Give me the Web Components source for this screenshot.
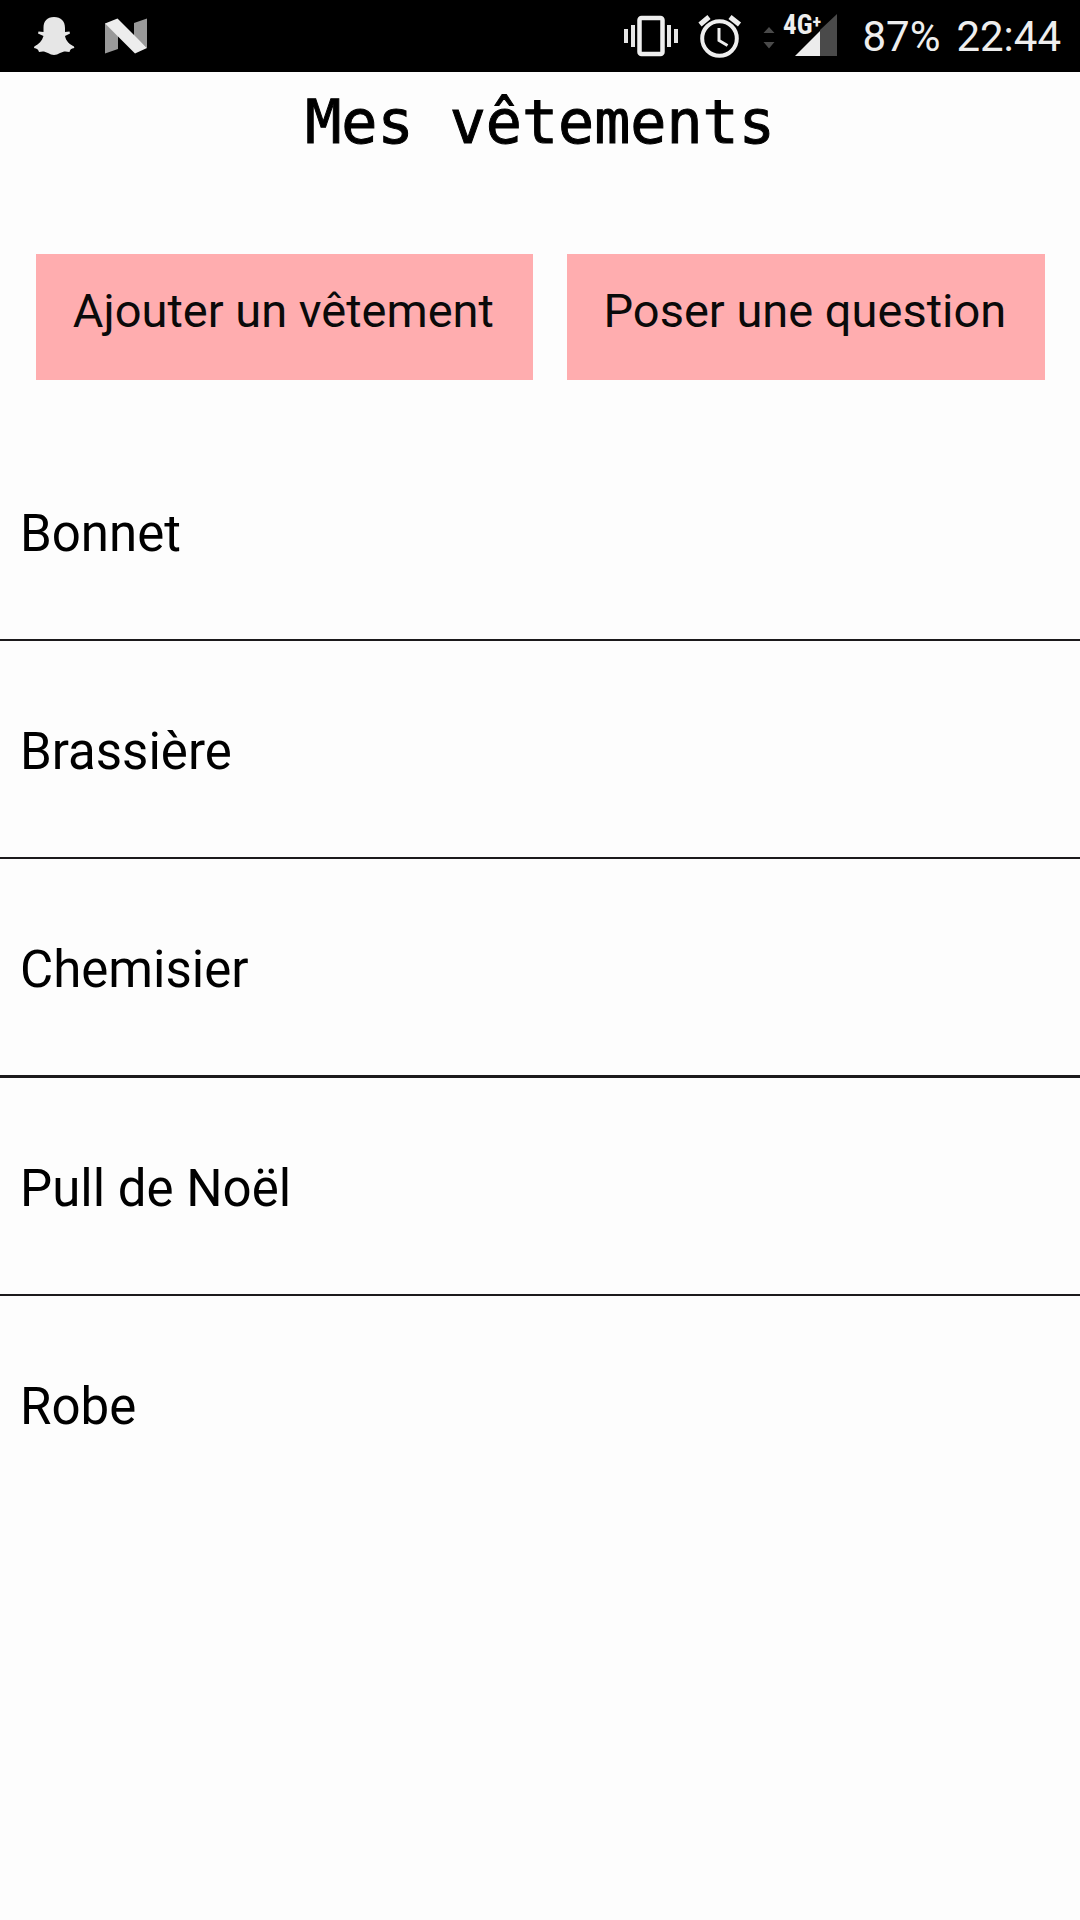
<!DOCTYPE html>
<html lang="fr">
<head>
<meta charset="utf-8">
<meta name="viewport" content="width=device-width, initial-scale=1">
<title>Mes vêtements</title>
<style>
html, body { margin: 0; min-height: 100%; background: #fdfdfd; }
body { font-family: Roboto, sans-serif; color: #000; }
</style>
</head>
<body>
<wardrobe-app></wardrobe-app>
<script>
function define(name, html) {
  const template = document.createElement('template');
  template.innerHTML = html;
  customElements.define(name, class extends HTMLElement {
    constructor() {
      super();
      this.attachShadow({ mode: 'open' }).appendChild(template.content.cloneNode(true));
    }
  });
}

define('status-bar', `
<style>
:host { display: flex; align-items: center; justify-content: space-between; box-sizing: border-box; height: 72px; padding: 0 19px 0 32px; background: #000; color: #eee; font-size: 42px; line-height: 72px; }
.group { display: flex; align-items: center; }
svg { display: block; flex: none; }
.network { font-family: "Roboto Condensed", Roboto, sans-serif; }
.readout { display: flex; gap: 16px; margin-left: 22px; padding-top: 2px; line-height: 70px; }
</style>
<div class="group">
<svg width="160" height="72" viewBox="32 0 160 72" aria-hidden="true">
<path fill="#e6e6e6" d="M54 17C61 17 65 21 65 28V32L69.500 31.500L70 33.500L65 36C66 41 69 44 74 46.500L74.300 48C71 48.500 70 49.500 69.500 52C65 51 63 51.500 60 53C56 55.500 52 55.500 48 53C45 51.500 43 51 39 52C38.500 49.500 37 48.500 34 48L34.300 46.500C39 44 42 41 43.500 36L38 33.500L38.500 31.500L43.500 32V28C43.500 21 47 17 54 17Z"/>
<path fill="#999" d="M105 23L118 35V49L105 53.500ZM134 23L147 18.500V48L134 36Z"/>
<path fill="#ededed" d="M105 23.500L117.500 18.500L147 48L135 53.500Z"/>
</svg>
</div>
<div class="group">
<svg width="216" height="72" viewBox="624 0 216 72" role="img" aria-label="Vibreur, alarme, réseau 4G+">
<rect x="639.500" y="18" width="23" height="36" rx="2" fill="none" stroke="#eee" stroke-width="4.500"/>
<path fill="#e6e6e6" d="M624 29h4v14h-4zM631 25h4v22h-4zM667 25h4v22h-4zM674 29h4v14h-4z"/>
<circle cx="719.500" cy="38.500" r="17.300" fill="none" stroke="#eee" stroke-width="4"/>
<path fill="none" stroke="#eee" stroke-width="5" d="M700 24.500L709 17M730 17L739.500 24.500"/>
<path fill="none" stroke="#eee" stroke-width="3" d="M719 28V40.500L727.500 45.500"/>
<path fill="#4a4a4a" d="M763.500 33L769 27L774.500 33ZM763.500 42H774.500L769 48.500ZM820 30L837 14V56H820Z"/>
<path fill="#ececec" d="M795 56L820 31V56Z"/>
<text x="783" y="34" class="network" font-size="27" font-weight="700" fill="#eee">4G<tspan dy="-6" font-size="18">+</tspan></text>
</svg>
<div class="readout"><span>87%</span><time>22:44</time></div>
</div>`);

define('page-title', `
<style>
:host { display: block; }
h1 { margin: 0; padding: 15px 0 13px; text-align: center; font: 400 60px/70px "DejaVu Sans Mono", monospace; -webkit-text-stroke: 1px #000; }
</style>
<h1><slot></slot></h1>`);

define('action-button', `
<style>
:host { display: flex; flex: 1 1 auto; }
button { flex: 1; margin: 0; padding: 29px 18px 41px 16px; border: 0; border-radius: 0; background: #ffadaf; color: #0a0a0a; font: 400 47px/56px Roboto, sans-serif; white-space: nowrap; cursor: pointer; }
</style>
<button type="button"><slot></slot></button>`);

define('garment-item', `
<style>
:host { display: block; padding: 81px 20px 75px; border-bottom: 2px solid #1c1a1c; font-size: 51px; line-height: 60px; }
:host(:nth-of-type(3)) { border-bottom-width: 3px; }
:host(:last-of-type) { border-bottom-color: transparent; }
</style>
<slot></slot>`);

define('garment-list', `
<style>
:host { display: block; padding-top: 43px; }
</style>
<div role="list"><slot></slot></div>`);

define('wardrobe-app', `
<style>
:host { display: block; }
.actions { display: flex; gap: 34px; padding: 84px 35px 0 36px; }
</style>
<status-bar></status-bar>
<main>
<page-title>Mes vêtements</page-title>
<div class="actions">
<action-button>Ajouter un vêtement</action-button>
<action-button>Poser une question</action-button>
</div>
<garment-list>
<garment-item role="listitem">Bonnet</garment-item>
<garment-item role="listitem">Brassière</garment-item>
<garment-item role="listitem">Chemisier</garment-item>
<garment-item role="listitem">Pull de Noël</garment-item>
<garment-item role="listitem">Robe</garment-item>
</garment-list>
</main>`);
</script>
</body>
</html>
